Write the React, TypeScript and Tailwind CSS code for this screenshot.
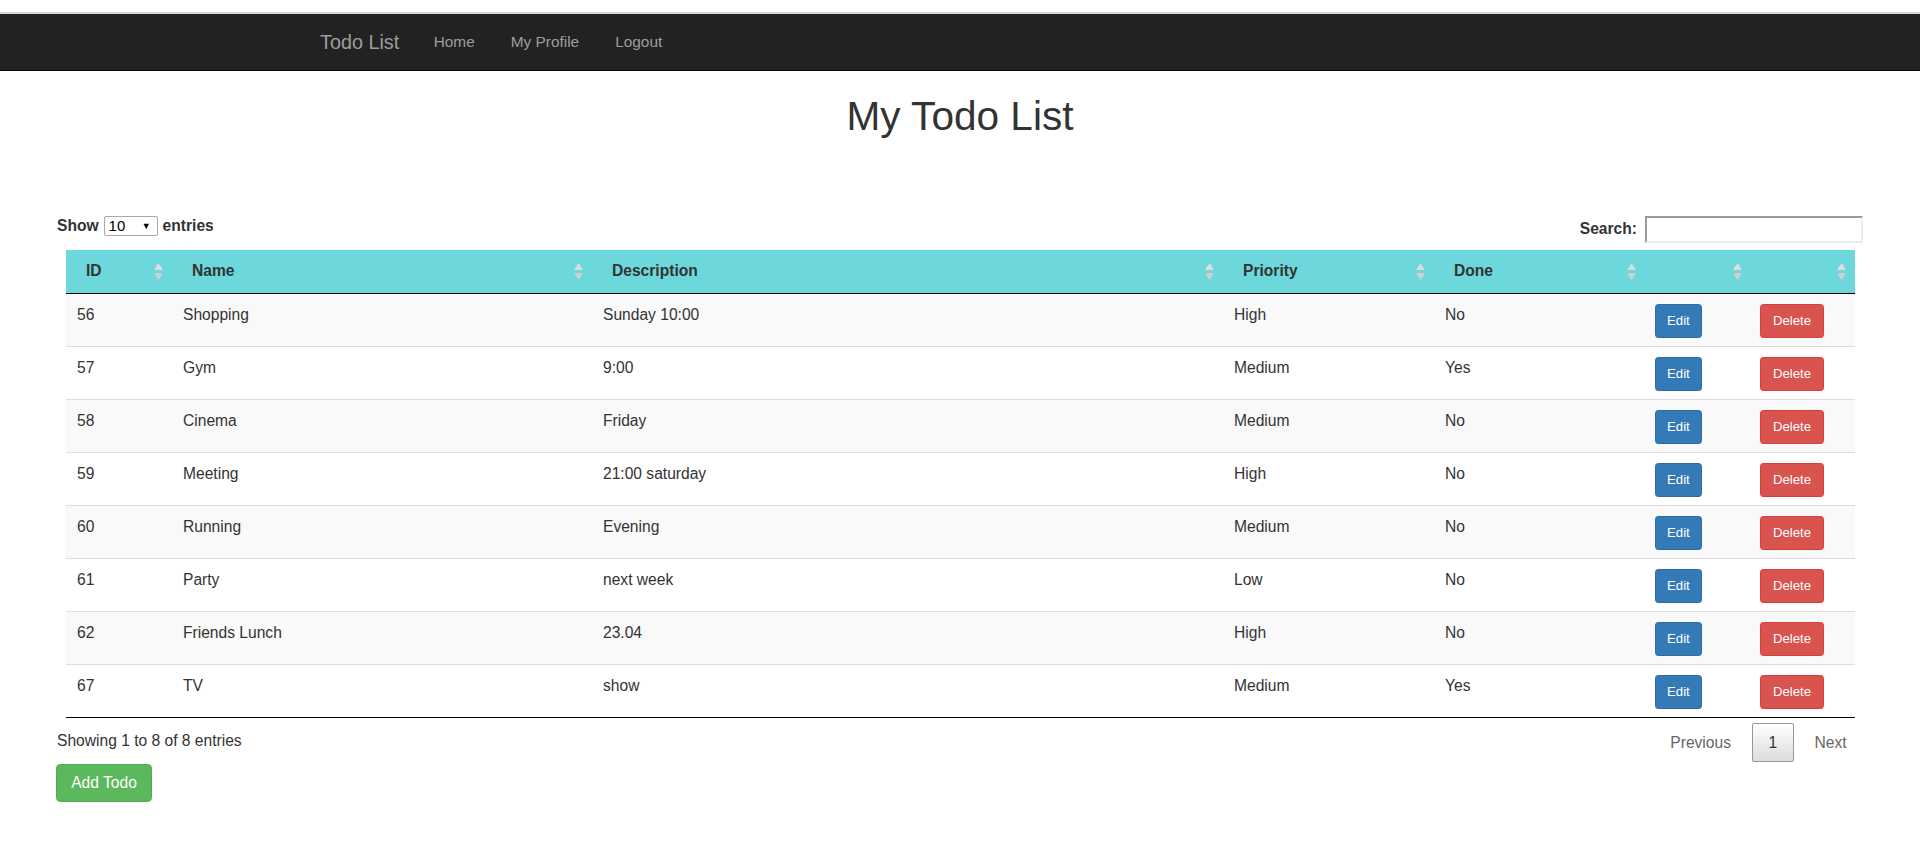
import React from 'react';

type Todo = {
  id: number;
  name: string;
  description: string;
  priority: string;
  done: string;
};

const todos: Todo[] = [
  { id: 56, name: 'Shopping', description: 'Sunday 10:00', priority: 'High', done: 'No' },
  { id: 57, name: 'Gym', description: '9:00', priority: 'Medium', done: 'Yes' },
  { id: 58, name: 'Cinema', description: 'Friday', priority: 'Medium', done: 'No' },
  { id: 59, name: 'Meeting', description: '21:00 saturday', priority: 'High', done: 'No' },
  { id: 60, name: 'Running', description: 'Evening', priority: 'Medium', done: 'No' },
  { id: 61, name: 'Party', description: 'next week', priority: 'Low', done: 'No' },
  { id: 62, name: 'Friends Lunch', description: '23.04', priority: 'High', done: 'No' },
  { id: 67, name: 'TV', description: 'show', priority: 'Medium', done: 'Yes' },
];

const columns = [
  { label: 'ID', width: 'w-[106px]' },
  { label: 'Name', width: 'w-[420px]' },
  { label: 'Description', width: 'w-[631px]' },
  { label: 'Priority', width: 'w-[211px]' },
  { label: 'Done', width: 'w-[211px]' },
  { label: '', width: 'w-[106px]' },
  { label: '', width: 'w-[104px]' },
];

const SortIcon: React.FC = () => (
  <svg width="9" height="17" viewBox="0 0 9 17" className="shrink-0">
    <polygon points="0,7 4.5,0 9,7" fill="#dcdcdc" />
    <polygon points="0,10 4.5,17 9,10" fill="#d0d0d0" />
  </svg>
);

const App: React.FC = () => {
  return (
    <div className="min-h-screen bg-white text-[#333] font-['Liberation_Sans',Arial,sans-serif] text-[15.6px] leading-[22px]">
      {/* navbar */}
      <div className="pt-[12px]">
        <div className="border-t-2 border-[#dadada] bg-[#222] border-b border-b-[#080808]">
          <div className="w-[1287px] mx-auto h-[56px] flex items-center">
            <a className="pl-[3.5px] pr-[16.5px] text-[19.8px] text-[#9d9d9d]">Todo List</a>
            <a className="px-[18px] text-[15.4px] text-[#9d9d9d]">Home</a>
            <a className="px-[18px] text-[15.4px] text-[#9d9d9d]">My Profile</a>
            <a className="px-[18px] text-[15.4px] text-[#9d9d9d]">Logout</a>
          </div>
        </div>
      </div>

      <h1 className="mt-[23px] text-center text-[40.6px] leading-[1.1] font-normal">My Todo List</h1>

      <div className="px-[57px] mt-[77px]">
        {/* controls */}
        <div className="flex justify-between items-start font-bold">
          <div className="flex items-center h-[20px]">
            <span>Show</span>
            <div className="mx-[5px] w-[54px] h-[20px] border border-[#a9a9a9] rounded-[2px] flex items-center justify-between pl-[4px] pr-[6px] font-normal text-[15px] text-black">
              <span>10</span>
              <span className="text-[9px]">▼</span>
            </div>
            <span>entries</span>
          </div>
          <div className="flex items-center">
            <span>Search:</span>
            <div className="ml-[8px] w-[218px] h-[27px] border-2 border-t-[#9a9a9a] border-l-[#9a9a9a] border-b-[#ececec] border-r-[#ececec] bg-white" />
          </div>
        </div>

        {/* table */}
        <div className="ml-[9px] mr-[8px] mt-[7px]">
          <table className="w-full table-fixed border-collapse">
            <colgroup>
              {columns.map((c, i) => (
                <col key={i} className={c.width} />
              ))}
            </colgroup>
            <thead>
              <tr className="bg-[#6cd8db]">
                {columns.map((c, i) => (
                  <th key={i} className="h-[44px] p-0 border-b border-black text-left font-bold">
                    <div className="flex items-center justify-between pl-[20px] pr-[9px]">
                      <span>{c.label}</span>
                      <SortIcon />
                    </div>
                  </th>
                ))}
              </tr>
            </thead>
            <tbody>
              {todos.map((t, i) => {
                const last = i === todos.length - 1;
                const cell = `h-[53px] align-top pt-[10px] px-[11px] border-b ${last ? 'border-black' : 'border-[#ddd]'}`;
                return (
                  <tr key={t.id} className={i % 2 === 0 ? 'bg-[#f9f9f9]' : 'bg-white'}>
                    <td className={cell}>{t.id}</td>
                    <td className={cell}>{t.name}</td>
                    <td className={cell}>{t.description}</td>
                    <td className={cell}>{t.priority}</td>
                    <td className={cell}>{t.done}</td>
                    <td className={`${cell} !pl-[10px]`}>
                      <button className="h-[34px] px-[11px] text-[13.2px] text-white bg-[#337ab7] border border-[#2e6da4] rounded-[3.3px]">
                        Edit
                      </button>
                    </td>
                    <td className={`${cell} !pl-[9px]`}>
                      <button className="h-[34px] px-[12px] text-[13.2px] text-white bg-[#d9534f] border border-[#d43f3a] rounded-[3.3px]">
                        Delete
                      </button>
                    </td>
                  </tr>
                );
              })}
            </tbody>
          </table>
        </div>

        {/* footer */}
        <div className="flex justify-between items-start">
          <div className="pt-[12px]">Showing 1 to 8 of 8 entries</div>
          <div className="pt-[5px] flex items-center">
            <span className="px-[16.4px] py-[8.7px] text-[#666]">Previous</span>
            <span className="mx-[4.4px] w-[42px] h-[39px] flex items-center justify-center border border-[#979797] rounded-[2px] bg-gradient-to-b from-white to-[#dcdcdc] text-[#333]">
              1
            </span>
            <span className="px-[16.4px] py-[8.7px] text-[#666]">Next</span>
          </div>
        </div>
        <button className="mt-[1px] -ml-[1px] w-[96px] h-[38px] text-white bg-[#5cb85c] border border-[#4cae4c] rounded-[4.4px]">
          Add Todo
        </button>
      </div>
    </div>
  );
};

export default App;
